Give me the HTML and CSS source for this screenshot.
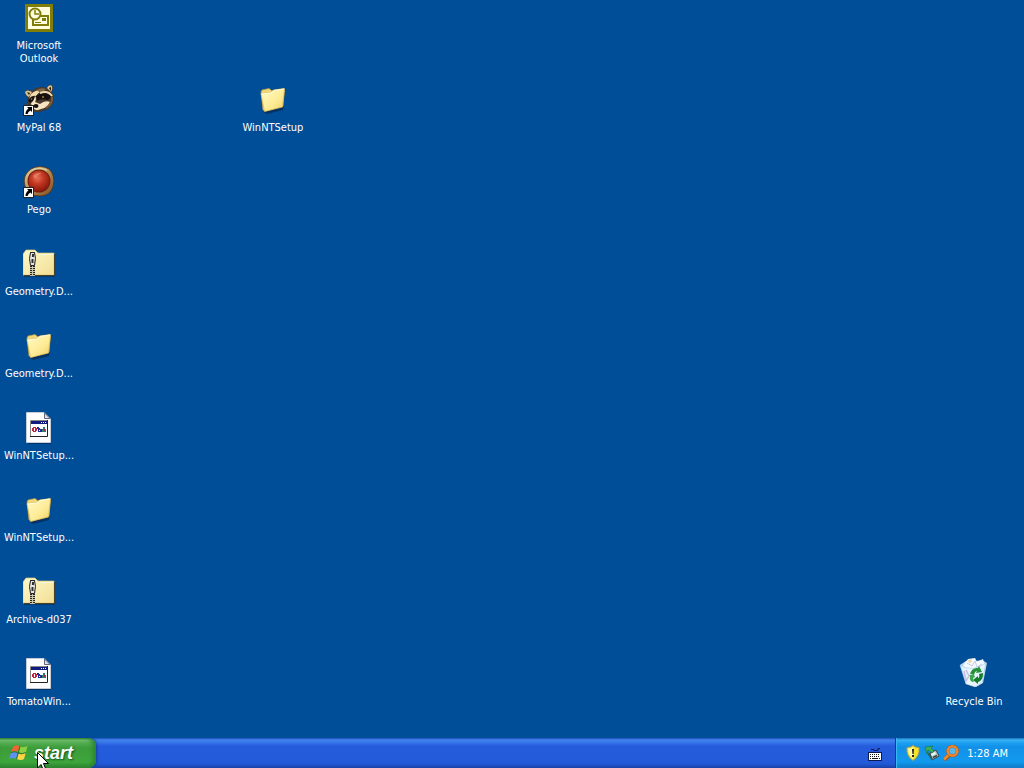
FILE: index.html
```html
<!DOCTYPE html>
<html lang="en">
<head>
<meta charset="utf-8">
<meta name="viewport" content="width=device-width, initial-scale=1">
<title>Desktop</title>
<link rel="stylesheet" href="styles.css">
</head>
<body>
<svg class="sprites" aria-hidden="true">
  <defs>
    <linearGradient id="paper-yellow" x1="0" y1="0" x2="1" y2="1">
      <stop offset="0" stop-color="#fffbc8"/><stop offset=".6" stop-color="#fdeb94"/><stop offset="1" stop-color="#efcf62"/>
    </linearGradient>
    <linearGradient id="zip-yellow" x1="0" y1="0" x2="1" y2="1">
      <stop offset="0" stop-color="#fdf8cc"/><stop offset="1" stop-color="#f2df92"/>
    </linearGradient>
    <radialGradient id="red-ball" cx=".42" cy=".35" r=".65">
      <stop offset="0" stop-color="#e87058"/><stop offset=".45" stop-color="#c43a24"/><stop offset="1" stop-color="#8c180c"/>
    </radialGradient>
    <linearGradient id="wood" x1="0" y1="0" x2="1" y2="1">
      <stop offset="0" stop-color="#e8d8a8"/><stop offset=".5" stop-color="#b88a50"/><stop offset="1" stop-color="#7c4a24"/>
    </linearGradient>
    <linearGradient id="bin-glass" x1="0" y1="0" x2="1" y2="0">
      <stop offset="0" stop-color="#a8cdec"/><stop offset=".35" stop-color="#f2f9ff"/><stop offset="1" stop-color="#b4d4e8"/>
    </linearGradient>
  </defs>
  <symbol id="shortcut" viewBox="0 0 11 11">
    <path d="M0 0h11v11H0z" fill="#222"/><path d="M1 1h9v9H1z" fill="#fff"/>
    <path d="M4 2h5v5L7.500 5.500Q5 6.500 4.600 9H2.500Q2.500 5.500 5.500 3.500z" fill="#000"/>
  </symbol>
  <symbol id="folder" viewBox="0 0 32 32">
    <path d="M5 9l1-2 8-1 2 2 11-2 1 3-2 17-16 4-3-2z" fill="#06234a" opacity=".65"/>
    <path d="M4 8l1-2 7-1.500 2.500 2L26 5l1.500 1.500L26 22 9 27l-3-1z" fill="#f0d878" stroke="#b89b45" stroke-width=".7"/>
    <path d="M4 9.500l10-1 3-2.500 10.500-1.500L25.500 23 7.500 27.500z" fill="url(#paper-yellow)" stroke="#dcbc58" stroke-width=".7"/>
    <path d="M4.500 10l9.500-1 3-2.500 10-1.500" fill="none" stroke="#fffde4"/>
  </symbol>
  <symbol id="zip" viewBox="0 0 32 32">
    <path d="M1 6l2-3h10l2 3h17v23H1z" fill="#06234a" opacity=".5"/>
    <path d="M0 6l3-4h9l3 3h16v22H0z" fill="url(#zip-yellow)" stroke="#d6c477" stroke-width=".7"/>
    <path d="M31.500 6v21.500H1" fill="none" stroke="#4a4228"/>
    <path d="M16 6.500h14" stroke="#fffbe0"/>
    <path d="M7 4h5v24H7z" fill="#c9c6ac"/>
    <path d="M8 4v24M11 4v24" stroke="#26241c" stroke-width="2" stroke-dasharray="1 1"/>
    <path d="M7.500 4.500h4l1 6-1 7h-4l-1-7z" fill="#e4e4dc" stroke="#222"/>
    <path d="M9 6h2v3H9zM8.500 11h2v4h-2z" fill="#333"/>
  </symbol>
  <symbol id="config" viewBox="0 0 32 32">
    <path d="M5 1h17l6 6v25H5z" fill="#06234a" opacity=".6"/>
    <path d="M3.500 .5H21l6.500 6.500v23.500h-24z" fill="#fdfdff" stroke="#c4ccd8"/>
    <path d="M21.500 1v5.500H27z" fill="#dbe2ee" stroke="#667"/>
    <path d="M7 8h17v17H7z" fill="#fff"/>
    <path d="M7.500 25V8.500H24" fill="none" stroke="#888"/>
    <path d="M24.500 8v16.500H7" fill="none" stroke="#222"/>
    <path d="M8 9h16v3H8z" fill="#101a80"/>
    <path d="M18 10h1v1h-1zM20 10h1v1h-1zM22 10h1v1h-1z" fill="#fff"/>
    <path d="M10 15h3v1h1v3h-1v1h-3v-1H9v-3h1z" fill="#c82040"/><path d="M11 16h1v3h-1z" fill="#fff"/>
    <path d="M14 15h2v1h1v1h2v3h-4v-3h-1z" fill="#1c2c98"/><path d="M16 18h1v1h-1z" fill="#fff"/>
    <path d="M20 15h2v2h1v3h-4v-3h1z" fill="#258070"/><path d="M21 17h1v2h-1z" fill="#b02050"/>
  </symbol>
  <symbol id="outlook" viewBox="0 0 32 32">
    <path d="M2 2h28v28H2z" fill="#807d08"/>
    <path d="M5 5h22v22H5z" fill="#fffde0"/>
    <path d="M12 14h13v9H10v-6" fill="none" stroke="#807d08" stroke-width="2"/>
    <path d="M19 16h4v3h-4z" fill="#807d08"/>
    <path d="M12 20.500h6" stroke="#807d08"/>
    <circle cx="12" cy="12" r="5.500" fill="#fffde0" stroke="#807d08" stroke-width="2"/>
    <path d="M12 8v4h4" fill="none" stroke="#807d08" stroke-width="1.500"/>
  </symbol>
  <symbol id="raccoon" viewBox="0 0 32 32">
    <path d="M2 9Q2 4 9 7Q15 1 24 4Q25 0 29 1Q31 4 29 8Q32 13 30 19Q28 25 19 27Q13 30 9 26L3 21Q5 17 4 13z" fill="#4a392b"/>
    <path d="M2 8Q4 5 9 8L6 13Q3 12 2 8zM24 4Q26 0 29 2Q30 5 28 8z" fill="#d7c391"/>
    <path d="M4 8l3 1-1 2zM26 4l2-1v4z" fill="#251a12"/>
    <path d="M8 10Q14 5 22 6Q15 8 13 12Q9 11 6 15z" fill="#f1ddb0"/>
    <path d="M14 6Q18 3 23 5L17 9z" fill="#826747"/>
    <path d="M13 12Q20 7 28 9Q29 13 25 16Q18 14 14 17z" fill="#17120f"/>
    <path d="M6 15Q9 11 13 13L10 18Q7 20 5 17z" fill="#17120f"/>
    <path d="M12 12Q14 14 12 18L17 20Q22 16 27 18Q24 24 18 25Q12 28 9 23L8 19Q11 17 12 12z" fill="#f5e5c2"/>
    <path d="M17 9Q25 6 29 12" fill="none" stroke="#f0dcae" stroke-width="2"/>
    <path d="M29 13Q30 20 23 24" fill="none" stroke="#7d5b38" stroke-width="2"/>
    <ellipse cx="13" cy="22" rx="2.500" ry="2" fill="#17120f"/>
    <circle cx="20" cy="13" r="1" fill="#b97838"/><circle cx="8.500" cy="15" r=".8" fill="#b97838"/>
    <use href="#shortcut" x="0" y="21" width="11" height="11"/>
  </symbol>
  <symbol id="pego" viewBox="0 0 32 32">
    <path d="M8 3Q17-2 26 3Q33 10 30 21Q27 30 17 30Q5 30 2 20Q-1 9 8 3z" fill="url(#wood)" stroke="#543018" stroke-width=".8"/>
    <path d="M9 4Q17 1 24 4" fill="none" stroke="#d9d0a0" stroke-width="1.500"/>
    <circle cx="16" cy="15" r="11.500" fill="#72200f"/>
    <circle cx="16" cy="15" r="10.500" fill="url(#red-ball)"/>
    <path d="M10 10Q13 6 19 7Q14 9 12 13z" fill="#f6b198" opacity=".4"/>
    <use href="#shortcut" x="0" y="21" width="11" height="11"/>
  </symbol>
  <symbol id="bin" viewBox="0 0 32 32">
    <path d="M4 8l24-2-4 20-7 4-9-3z" fill="#06234a" opacity=".6"/>
    <path d="M2 7L8 3l5-2 5 2 6-1 5 3-4 20-7 4-10-3z" fill="url(#bin-glass)"/>
    <path d="M5 8l5-7 7-1 2 4 6-3 2 8-12 4z" fill="#f6f8ff"/>
    <path d="M9 5l5 3 3-5 2 6 5-3" fill="none" stroke="#c3cbe6"/>
    <path d="M10 2l3-1 1 3-3 1z" fill="#f1d7a4"/>
    <path d="M2 7Q14 15 28 5L24 25l-7 4-9-3z" fill="#eaf6fd" opacity=".82" stroke="#9ccaf0" stroke-width=".7"/>
    <path d="M6 13l2 10 3-5-3-6" fill="none" stroke="#cabfe0" stroke-width="1.500"/>
    <path d="M12 16Q14 9 20 10l1-2 3 6-6 1 1-2Q17 13 16 17z" fill="#25923a"/>
    <path d="M25 15Q25 23 20 24v2l-5-4 5-4v2Q22 20 21 16z" fill="#147c2c"/>
    <path d="M11 17l5 0 1 2-2 1q0 2 1 4-5 0-4-6z" fill="#37a84a"/>
  </symbol>
  <symbol id="flag" viewBox="0 0 20 20">
    <path d="M4 4Q7 1 10.500 3L9 9Q6 7 2 9z" fill="#ed6533"/>
    <path d="M11.500 3.500Q15 5 18.500 3L17 9Q13 11 10 9z" fill="#8bd13f"/>
    <path d="M2 10Q5 8 8.700 10L7 16Q4 14 0 16z" fill="#5d91f4"/>
    <path d="M9.700 10.500Q13 12 16.700 10L15 16Q12 18 8 16z" fill="#ffd545"/>
    <path d="M11 3L7.500 16M2 9.500Q6 8 9 10T17 9.500" fill="none" stroke="#205b28" stroke-width=".6"/>
  </symbol>
  <symbol id="keyboard" viewBox="0 0 14 14">
    <path d="M3 2.500h3v1h4v-2h2" fill="none" stroke="#0c1a50"/>
    <path d="M0 5h14v9H0z" fill="#0c1a50"/><path d="M1 6h12v7H1z" fill="#fff"/>
    <path d="M2 7.500h10M2 9.500h10" stroke="#111" stroke-dasharray="1 1"/>
    <path d="M2 11.500h1M4 11.500h6M11 11.500h1" stroke="#111"/>
  </symbol>
  <symbol id="shield" viewBox="0 0 16 16">
    <path d="M8 .5Q10 2.500 14 2.500Q15 11 8 15.500Q1 11 2 2.500Q6 2.500 8 .5z" fill="#f7e22a" stroke="#a89d58"/>
    <path d="M8 2Q6 3.500 3.200 3.600Q3 10 8 14z" fill="#fffaa8"/>
    <path d="M7 4h2l-.4 5H7.400zM7 10h2v2H7z" fill="#222"/>
  </symbol>
  <symbol id="safely" viewBox="0 0 16 16">
    <path d="M6 8l6-3 3 6-7 4z" fill="#b4c2c4" stroke="#34484c"/>
    <path d="M7 9l4-2 1 2-4 2z" fill="#f0f5f4"/>
    <path d="M9 12.500l4-2" stroke="#394447" stroke-width="1.500"/>
    <path d="M1 2l8-1-2 2 3 3-2 2-4-3-1 4z" fill="#3fae58" stroke="#16703a" stroke-width=".6"/>
    <path d="M4 8l4 6" stroke="#276157" stroke-width="2"/>
  </symbol>
  <symbol id="magnifier" viewBox="0 0 16 16">
    <path d="M6 10l-5 5" stroke="#a85018" stroke-width="4"/>
    <path d="M6 9.500l-5 5" stroke="#f18b32" stroke-width="2.500"/>
    <circle cx="9.500" cy="6" r="4.800" fill="#57b7ea" stroke="#b85a1c" stroke-width="3"/>
    <circle cx="9.500" cy="6" r="4.800" fill="none" stroke="#f18b32" stroke-width="2"/>
  </symbol>
</svg>

<main class="desktop">
  <div class="icon-column">
    <button class="shortcut"><svg class="icon"><use href="#outlook"/></svg><span>Microsoft Outlook</span></button>
    <button class="shortcut"><svg class="icon"><use href="#raccoon"/></svg><span>MyPal 68</span></button>
    <button class="shortcut"><svg class="icon"><use href="#pego"/></svg><span>Pego</span></button>
    <button class="shortcut"><svg class="icon"><use href="#zip"/></svg><span>Geometry.D...</span></button>
    <button class="shortcut"><svg class="icon"><use href="#folder"/></svg><span>Geometry.D...</span></button>
    <button class="shortcut"><svg class="icon"><use href="#config"/></svg><span>WinNTSetup...</span></button>
    <button class="shortcut"><svg class="icon"><use href="#folder"/></svg><span>WinNTSetup...</span></button>
    <button class="shortcut"><svg class="icon"><use href="#zip"/></svg><span>Archive-d037</span></button>
    <button class="shortcut"><svg class="icon"><use href="#config"/></svg><span>TomatoWin...</span></button>
  </div>
  <button class="shortcut placed-folder"><svg class="icon"><use href="#folder"/></svg><span>WinNTSetup</span></button>
  <button class="shortcut placed-bin"><svg class="icon"><use href="#bin"/></svg><span>Recycle Bin</span></button>
</main>

<footer class="taskbar">
  <button class="start"><svg class="flag" aria-hidden="true"><use href="#flag"/></svg><span>start</span></button>
  <button class="language" aria-label="Keyboard layout"><svg class="keyboard"><use href="#keyboard"/></svg></button>
  <div class="tray">
    <button class="tray-item" aria-label="Security alerts"><svg class="tray-icon"><use href="#shield"/></svg></button>
    <button class="tray-item" aria-label="Safely remove hardware"><svg class="tray-icon"><use href="#safely"/></svg></button>
    <button class="tray-item" aria-label="Search"><svg class="tray-icon"><use href="#magnifier"/></svg></button>
    <time class="clock" datetime="01:28">1:28 AM</time>
  </div>
  <svg class="pointer" viewBox="0 0 12 20" aria-hidden="true"><path d="M.5 .5v15.500l3.500-3.500 2.500 6 2.500-1-2.500-6h5z" fill="#fff" stroke="#000"/></svg>
</footer>
</body>
</html>
```
FILE: styles.css
```css
* {
  box-sizing: border-box;
}

body {
  margin: 0;
  min-height: 100vh;
  display: flex;
  flex-direction: column;
  overflow: hidden;
  background: #004e98;
  color: #fff;
  font-family: Tahoma, "DejaVu Sans Condensed", "DejaVu Sans", sans-serif;
  font-size: 11px;
  line-height: 13px;
}

button {
  margin: 0;
  padding: 0;
  border: 0;
  background: none;
  color: inherit;
  font: inherit;
}

.sprites {
  position: absolute;
  width: 0;
  height: 0;
}

.desktop {
  position: relative;
  flex: 1;
}

.icon-column {
  display: flex;
  flex-direction: column;
  align-items: flex-start;
}

.shortcut {
  display: flex;
  flex-direction: column;
  align-items: center;
  gap: 5px;
  width: 78px;
  height: 82px;
  padding-top: 2px;
  text-align: center;
}

.icon {
  flex: none;
  width: 32px;
  height: 32px;
}

.placed-folder {
  position: absolute;
  left: 234px;
  top: 82px;
}

.placed-bin {
  position: absolute;
  right: 11px;
  bottom: 0;
}

.taskbar {
  position: relative;
  display: flex;
  height: 30px;
  background: linear-gradient(#1f50b8 0, #4084f0 2px, #3a78ea 4px, #245cdc 8px, #235bdb 22px, #2058d4 26px, #1941a5 30px);
}

.start {
  display: flex;
  align-items: center;
  gap: 5px;
  width: 96px;
  padding: 0 9px;
  border-radius: 0 8px 8px 0;
  background: linear-gradient(#2c7a30 0, #78c474 2px, #52ac50 5px, #3c9c3a 10px, #3ea63c 24px, #2c8430 30px);
  box-shadow: inset -3px 0 4px #2c8430, 1px 0 3px #153f98;
  font-family: "Liberation Sans", Arial, sans-serif;
  font-size: 18px;
  font-style: italic;
  font-weight: 700;
  line-height: 24px;
  text-shadow: 1px 1px 2px #174c19;
}

.flag {
  width: 20px;
  height: 20px;
}

.language {
  display: flex;
  align-items: center;
  margin-left: auto;
  padding: 2px 13px 0;
}

.keyboard {
  width: 14px;
  height: 14px;
}

.tray {
  display: flex;
  align-items: center;
  gap: 3px;
  padding: 0 16px 0 9px;
  border-left: 1px solid #0c3c94;
  background: linear-gradient(#1469bc 0, #3bb5f2 2px, #1b9ff0 5px, #1290e8 9px, #129aee 24px, #0e76c4 30px);
  box-shadow: inset 1px 0 1px #40bcf4;
}

.tray-item {
  display: flex;
}

.tray-icon {
  width: 16px;
  height: 16px;
}

.clock {
  margin-left: 5px;
  white-space: nowrap;
}

.pointer {
  position: absolute;
  left: 37px;
  top: 14px;
  width: 12px;
  height: 20px;
}
```
